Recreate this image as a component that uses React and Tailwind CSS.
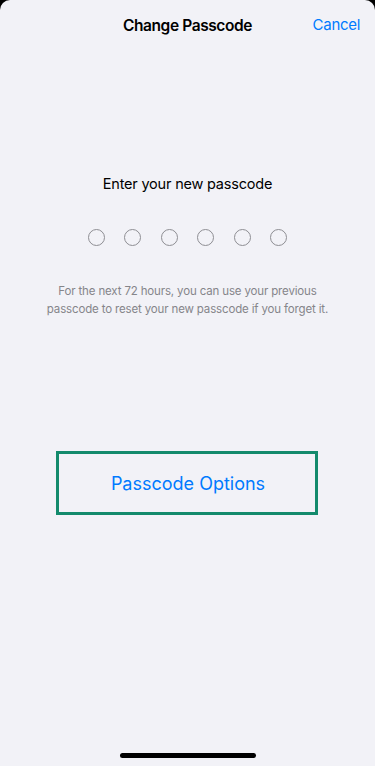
export default function App() {
  const dots = [0, 1, 2, 3, 4, 5];
  return (
    <div className="w-[375px] h-[766px] bg-black" style={{ fontFamily: "Inter, 'Noto Sans', sans-serif" }}>
      <div className="relative flex flex-col h-full bg-[#f2f2f7] rounded-t-[10px] overflow-hidden">
        {/* Nav bar */}
        <div className="relative flex items-center justify-center h-[48px] pt-[3px]">
          <h1 className="text-[15.5px] font-semibold text-black tracking-[-0.4px]">Change Passcode</h1>
          <button className="absolute right-[15px] top-[14px] text-[15px] text-[#007aff] tracking-[-0.3px]">Cancel</button>
        </div>

        {/* Prompt */}
        <p className="mt-[124px] text-center text-[14.5px] text-black tracking-[-0.2px] leading-[24px]">
          Enter your new passcode
        </p>

        <div className="mt-[33px] flex justify-center gap-[19.5px]">
          {dots.map((d) => (
            <span key={d} className="block w-[17px] h-[17px] rounded-full border-[1.5px] border-[#8e8e93]" />
          ))}
        </div>

        <p className="mt-[36px] text-center text-[11.5px] leading-[18px] text-[#85858a] tracking-[-0.15px]">
          For the next 72 hours, you can use your previous
          <br />
          passcode to reset your new passcode if you forget it.
        </p>

        <div className="mt-[133px] flex justify-center pr-[1px]">
          <div className="w-[262px] h-[64px] border-[3px] border-[#138a6c] flex items-center justify-center">
            <span className="text-[18px] text-[#007aff] pl-[2px]">Passcode Options</span>
          </div>
        </div>

        <div className="mt-auto mb-[8px] flex justify-center">
          <span className="block w-[136px] h-[5px] rounded-full bg-black" />
        </div>
      </div>
    </div>
  );
}
